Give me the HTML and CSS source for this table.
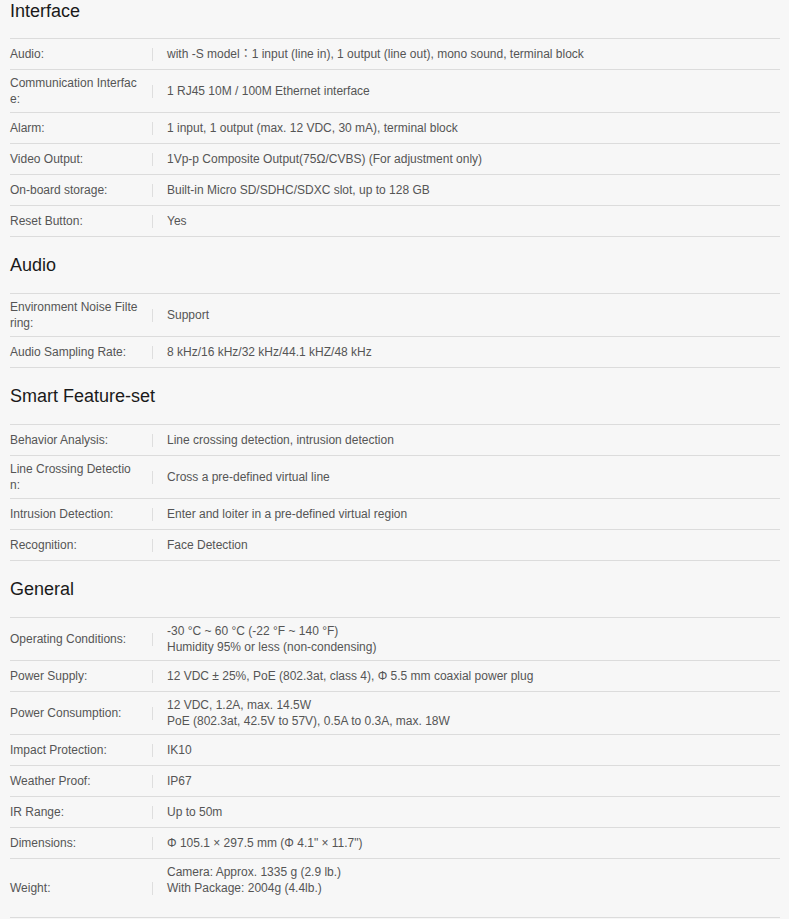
FILE: index.html
```html
<!DOCTYPE html>
<html lang="en">
<head>
<meta charset="utf-8">
<title>Specifications</title>
<link rel="stylesheet" href="styles.css">
</head>
<body>
<div class="spec">
  <section class="group first">
    <h2 class="group-title">Interface</h2>
    <div class="rows">
      <div class="row"><div class="label">Audio:</div><span class="sep"></span><div class="value">with -S model：1 input (line in), 1 output (line out), mono sound, terminal block</div></div>
      <div class="row"><div class="label">Communication Interface:</div><span class="sep"></span><div class="value">1 RJ45 10M / 100M Ethernet interface</div></div>
      <div class="row"><div class="label">Alarm:</div><span class="sep"></span><div class="value">1 input, 1 output (max. 12 VDC, 30 mA), terminal block</div></div>
      <div class="row"><div class="label">Video Output:</div><span class="sep"></span><div class="value">1Vp-p Composite Output(75Ω/CVBS) (For adjustment only)</div></div>
      <div class="row"><div class="label">On-board storage:</div><span class="sep"></span><div class="value">Built-in Micro SD/SDHC/SDXC slot, up to 128 GB</div></div>
      <div class="row"><div class="label">Reset Button:</div><span class="sep"></span><div class="value">Yes</div></div>
    </div>
  </section>
  <section class="group">
    <h2 class="group-title">Audio</h2>
    <div class="rows">
      <div class="row"><div class="label">Environment Noise Filtering:</div><span class="sep"></span><div class="value">Support</div></div>
      <div class="row"><div class="label">Audio Sampling Rate:</div><span class="sep"></span><div class="value">8 kHz/16 kHz/32 kHz/44.1 kHZ/48 kHz</div></div>
    </div>
  </section>
  <section class="group">
    <h2 class="group-title">Smart Feature-set</h2>
    <div class="rows">
      <div class="row"><div class="label">Behavior Analysis:</div><span class="sep"></span><div class="value">Line crossing detection, intrusion detection</div></div>
      <div class="row"><div class="label">Line Crossing Detection:</div><span class="sep"></span><div class="value">Cross a pre-defined virtual line</div></div>
      <div class="row"><div class="label">Intrusion Detection:</div><span class="sep"></span><div class="value">Enter and loiter in a pre-defined virtual region</div></div>
      <div class="row"><div class="label">Recognition:</div><span class="sep"></span><div class="value">Face Detection</div></div>
    </div>
  </section>
  <section class="group">
    <h2 class="group-title">General</h2>
    <div class="rows">
      <div class="row"><div class="label">Operating Conditions:</div><span class="sep"></span><div class="value">-30 °C ~ 60 °C (-22 °F ~ 140 °F)<br>Humidity 95% or less (non-condensing)</div></div>
      <div class="row"><div class="label">Power Supply:</div><span class="sep"></span><div class="value">12 VDC ± 25%, PoE (802.3at, class 4), Φ 5.5 mm coaxial power plug</div></div>
      <div class="row"><div class="label">Power Consumption:</div><span class="sep"></span><div class="value">12 VDC, 1.2A, max. 14.5W<br>PoE (802.3at, 42.5V to 57V), 0.5A to 0.3A, max. 18W</div></div>
      <div class="row"><div class="label">Impact Protection:</div><span class="sep"></span><div class="value">IK10</div></div>
      <div class="row"><div class="label">Weather Proof:</div><span class="sep"></span><div class="value">IP67</div></div>
      <div class="row"><div class="label">IR Range:</div><span class="sep"></span><div class="value">Up to 50m</div></div>
      <div class="row"><div class="label">Dimensions:</div><span class="sep"></span><div class="value">Φ 105.1 × 297.5 mm (Φ 4.1" × 11.7")</div></div>
      <div class="row"><div class="label">Weight:</div><span class="sep"></span><div class="value">Camera: Approx. 1335 g (2.9 lb.)<br>With Package: 2004g (4.4lb.)<br>&nbsp;</div></div>
    </div>
  </section>
</div>
</body>
</html>
```

FILE: styles.css
```css
html, body {
  margin: 0;
  padding: 0;
  background: #f7f7f7;
}

body {
  font-family: "Liberation Sans", Arial, "Noto Sans CJK TC", sans-serif;
  color: #555;
}

.spec {
  margin: 0 9px 0 10px;
}

.group-title {
  margin: 0;
  padding: 18px 0 17px;
  font-size: 18px;
  line-height: 21px;
  font-weight: normal;
  color: #1a1a1a;
}

.group.first .group-title {
  padding: 1px 0 16px;
}

.rows {
  border-top: 1px solid #dcdcdc;
}

.row {
  display: flex;
  align-items: center;
  box-sizing: border-box;
  min-height: 31px;
  padding: 5px 0;
  border-bottom: 1px solid #dcdcdc;
  font-size: 12px;
  line-height: 16px;
}

.label {
  flex: 0 0 128px;
  width: 128px;
  margin-right: 14px;
  word-break: break-all;
}

.sep {
  flex: 0 0 1px;
  width: 1px;
  height: 13px;
  background: #dedede;
}

.value {
  flex: 1 1 auto;
  padding-left: 14px;
}
```
